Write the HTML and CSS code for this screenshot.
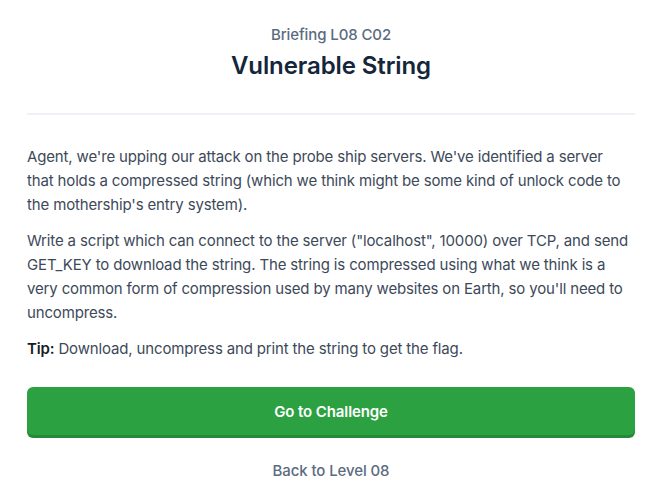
FILE: index.html
```html
<!DOCTYPE html>
<html lang="en">
<head>
<meta charset="utf-8">
<title>Vulnerable String</title>
<link rel="stylesheet" href="styles.css">
</head>
<body>
<main class="briefing">
  <header class="head">
    <div class="kicker">Briefing L08 C02</div>
    <h1 class="title">Vulnerable String</h1>
  </header>
  <section class="content">
    <p>Agent, we're upping our attack on the probe ship servers. We've identified a server that holds a compressed string (which we think might be some kind of unlock code to the mothership's entry system).</p>
    <p>Write a script which can connect to the server ("localhost", 10000) over TCP, and send GET_KEY to download the string. The string is compressed using what we think is a very common form of compression used by many websites on Earth, so you'll need to uncompress.</p>
    <p><strong class="tip">Tip:</strong> Download, uncompress and print the string to get the flag.</p>
  </section>
  <a class="btn" href="#">Go to Challenge</a>
  <a class="back" href="#">Back to Level 08</a>
</main>
</body>
</html>
```

FILE: styles.css
```css
html, body {
  margin: 0;
  padding: 0;
  background: #ffffff;
}
body {
  font-family: Inter, Roboto, "Liberation Sans", sans-serif;
  color: #3d4959;
}
.briefing {
  display: flex;
  flex-direction: column;
  padding: 25px 21px 0 27px;
}
.head {
  display: flex;
  flex-direction: column;
  align-items: center;
  padding-bottom: 31px;
  border-bottom: 2px solid #eef1f5;
}
.kicker {
  font-size: 15px;
  line-height: 20px;
  font-weight: 500;
  color: #5b6b80;
  letter-spacing: -0.1px;
}
.title {
  margin: 5px 0 0;
  font-size: 24px;
  line-height: 32px;
  font-weight: 600;
  color: #15253a;
  letter-spacing: -0.1px;
}
.content {
  padding: 30px 4px 0 0;
}
.content p {
  margin: 0 0 12px;
  font-size: 15px;
  line-height: 24px;
  letter-spacing: -0.15px;
}
.tip {
  font-weight: 600;
  color: #161b22;
}
.btn {
  display: flex;
  align-items: center;
  justify-content: center;
  margin-top: 14px;
  height: 48px;
  background: #2ba141;
  border-radius: 6px;
  box-shadow: 0 3px 0 #238a37;
  color: #ffffff;
  font-size: 15px;
  font-weight: 600;
  letter-spacing: -0.1px;
  text-decoration: none;
}
.back {
  align-self: center;
  margin-top: 26px;
  font-size: 15px;
  line-height: 20px;
  font-weight: 500;
  color: #5b6b80;
  letter-spacing: -0.1px;
  text-decoration: none;
}
```
